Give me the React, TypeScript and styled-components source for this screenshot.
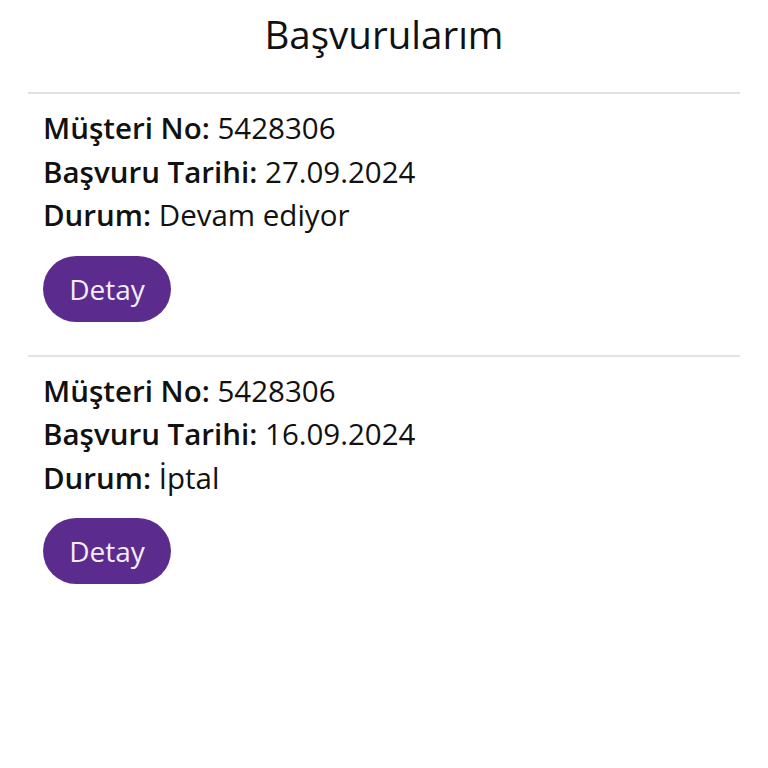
import React from 'react';
import styled, { createGlobalStyle } from 'styled-components';

const GlobalStyle = createGlobalStyle`
  html, body {
    margin: 0;
    padding: 0;
    background: #ffffff;
  }

  body {
    font-family: 'Open Sans', 'Noto Sans', sans-serif;
    color: #111111;
  }
`;

const Page = styled.div`
  width: 768px;
  min-height: 768px;
  background: #ffffff;
`;

const Header = styled.header`
  height: 94px;
  padding-top: 15px;
  display: flex;
  justify-content: center;
  align-items: flex-start;
  border-bottom: 2px solid #e2e2e2;
  margin: 0 28px;
  box-sizing: border-box;
`;

const Title = styled.h1`
  margin: 0;
  font-size: 38.5px;
  font-weight: 400;
  line-height: 1;
  color: #111111;
`;

const List = styled.div`
  margin: 0 28px;
`;

const Item = styled.div<{ $last?: boolean }>`
  padding: 12px 16px 33px 15px;
  border-bottom: ${({ $last }) => ($last ? 'none' : '2px solid #e2e2e2')};
`;

const Line = styled.div`
  font-size: 29.5px;
  line-height: 43.5px;
  color: #111111;
`;

const Label = styled.span`
  font-weight: 600;
`;

const DetailButton = styled.button`
  display: block;
  margin-top: 19px;
  width: 128px;
  height: 66px;
  padding: 0;
  border: none;
  border-radius: 33px;
  background: #5b2c8d;
  color: #f4edf8;
  font-family: 'Open Sans', 'Noto Sans', sans-serif;
  font-size: 28px;
  cursor: pointer;
`;

interface Application {
  customerNo: string;
  date: string;
  status: string;
}

const applications: Application[] = [
  { customerNo: '5428306', date: '27.09.2024', status: 'Devam ediyor' },
  { customerNo: '5428306', date: '16.09.2024', status: 'İptal' },
];

const App: React.FC = () => {
  return (
    <Page>
      <GlobalStyle />
      <Header>
        <Title>Başvurularım</Title>
      </Header>
      <List>
        {applications.map((app, i) => (
          <Item key={i} $last={i === applications.length - 1}>
            <Line>
              <Label>Müşteri No:</Label> {app.customerNo}
            </Line>
            <Line>
              <Label>Başvuru Tarihi:</Label> {app.date}
            </Line>
            <Line>
              <Label>Durum:</Label> {app.status}
            </Line>
            <DetailButton>Detay</DetailButton>
          </Item>
        ))}
      </List>
    </Page>
  );
};

export default App;
